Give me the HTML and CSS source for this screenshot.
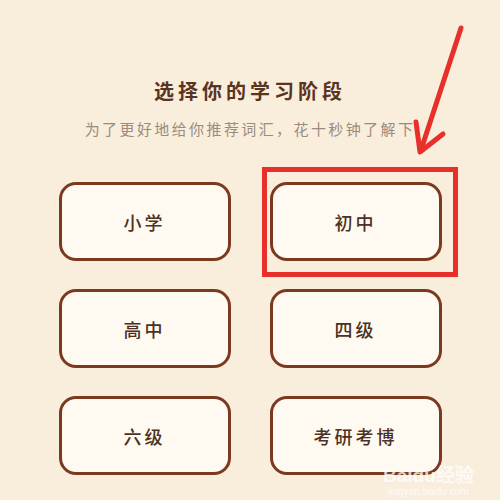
FILE: index.html
```html
<!DOCTYPE html>
<html lang="zh-CN">
<head>
    <meta charset="UTF-8">
    <meta name="viewport" content="width=device-width, initial-scale=1.0">
    <title>选择学习阶段</title>
    <link rel="stylesheet" href="styles.css">
</head>
<body>

<div class="page">
    <h2 class="title">选择你的学习阶段</h2>
    <p class="subtitle">为了更好地给你推荐词汇，花十秒钟了解下</p>

    <div class="stage-grid">
        <button class="stage-btn">小学</button>
        <div class="marked">
            <button class="stage-btn">初中</button>
        </div>
        <button class="stage-btn">高中</button>
        <button class="stage-btn">四级</button>
        <button class="stage-btn">六级</button>
        <button class="stage-btn">考研考博</button>
    </div>
</div>

<!-- red arrow annotation -->
<svg class="arrow" width="500" height="500" viewBox="0 0 500 500">
    <line x1="461" y1="28" x2="421" y2="150" stroke="#e8302a" stroke-width="5" stroke-linecap="round"/>
    <polyline points="416,122 420,152 443,134" fill="none" stroke="#e8302a" stroke-width="5" stroke-linecap="round" stroke-linejoin="round"/>
</svg>

<div class="watermark">
    <span class="wm-logo">Bai<span class="wm-paw">du</span>经验</span>
    <span class="wm-url">jingyan.baidu.com</span>
</div>

</body>
</html>
```

FILE: styles.css
```css
/* Halaman */
body {
    margin: 0;
    background-color: #f9eddc;
    font-family: "Noto Sans CJK SC", "Noto Sans", sans-serif;
}

.page {
    width: 500px;
    height: 500px;
    padding-top: 76px;
    box-sizing: border-box;
}

/* Judul */
.title {
    margin: 0;
    text-align: center;
    font-size: 20px;
    font-weight: 600;
    letter-spacing: 4px;
    color: #5b341f;
    line-height: 30px;
}

.subtitle {
    margin: 12px 0 0;
    text-align: center;
    font-size: 15px;
    letter-spacing: 2.4px;
    color: #9b8b7e;
    line-height: 22px;
}

/* Tombol pilihan */
.stage-grid {
    display: grid;
    grid-template-columns: 172px 172px;
    column-gap: 39px;
    row-gap: 28px;
    justify-content: center;
    margin-top: 42px;
}

.stage-btn {
    width: 172px;
    height: 79px;
    border: 3px solid #7b3a1f;
    border-radius: 17px;
    background-color: #fffaf1;
    font-family: inherit;
    font-size: 18px;
    font-weight: 500;
    letter-spacing: 3px;
    color: #4d3122;
    padding: 0;
}

.marked {
    position: relative;
}

.marked::after {
    content: "";
    position: absolute;
    left: -8px;
    top: -15px;
    right: -16px;
    bottom: -16px;
    border: 5px solid #e8302a;
}

.arrow {
    position: absolute;
    left: 0;
    top: 0;
    pointer-events: none;
}

/* Watermark */
.watermark {
    position: absolute;
    left: 383px;
    top: 466px;
    display: flex;
    flex-direction: column;
    align-items: flex-start;
    color: rgba(255, 255, 255, 0.75);
    font-family: "Liberation Sans", sans-serif;
}

.wm-logo {
    font-size: 19px;
    font-weight: bold;
    line-height: 20px;
}

.wm-url {
    font-size: 10px;
    margin-left: 5px;
}
```
